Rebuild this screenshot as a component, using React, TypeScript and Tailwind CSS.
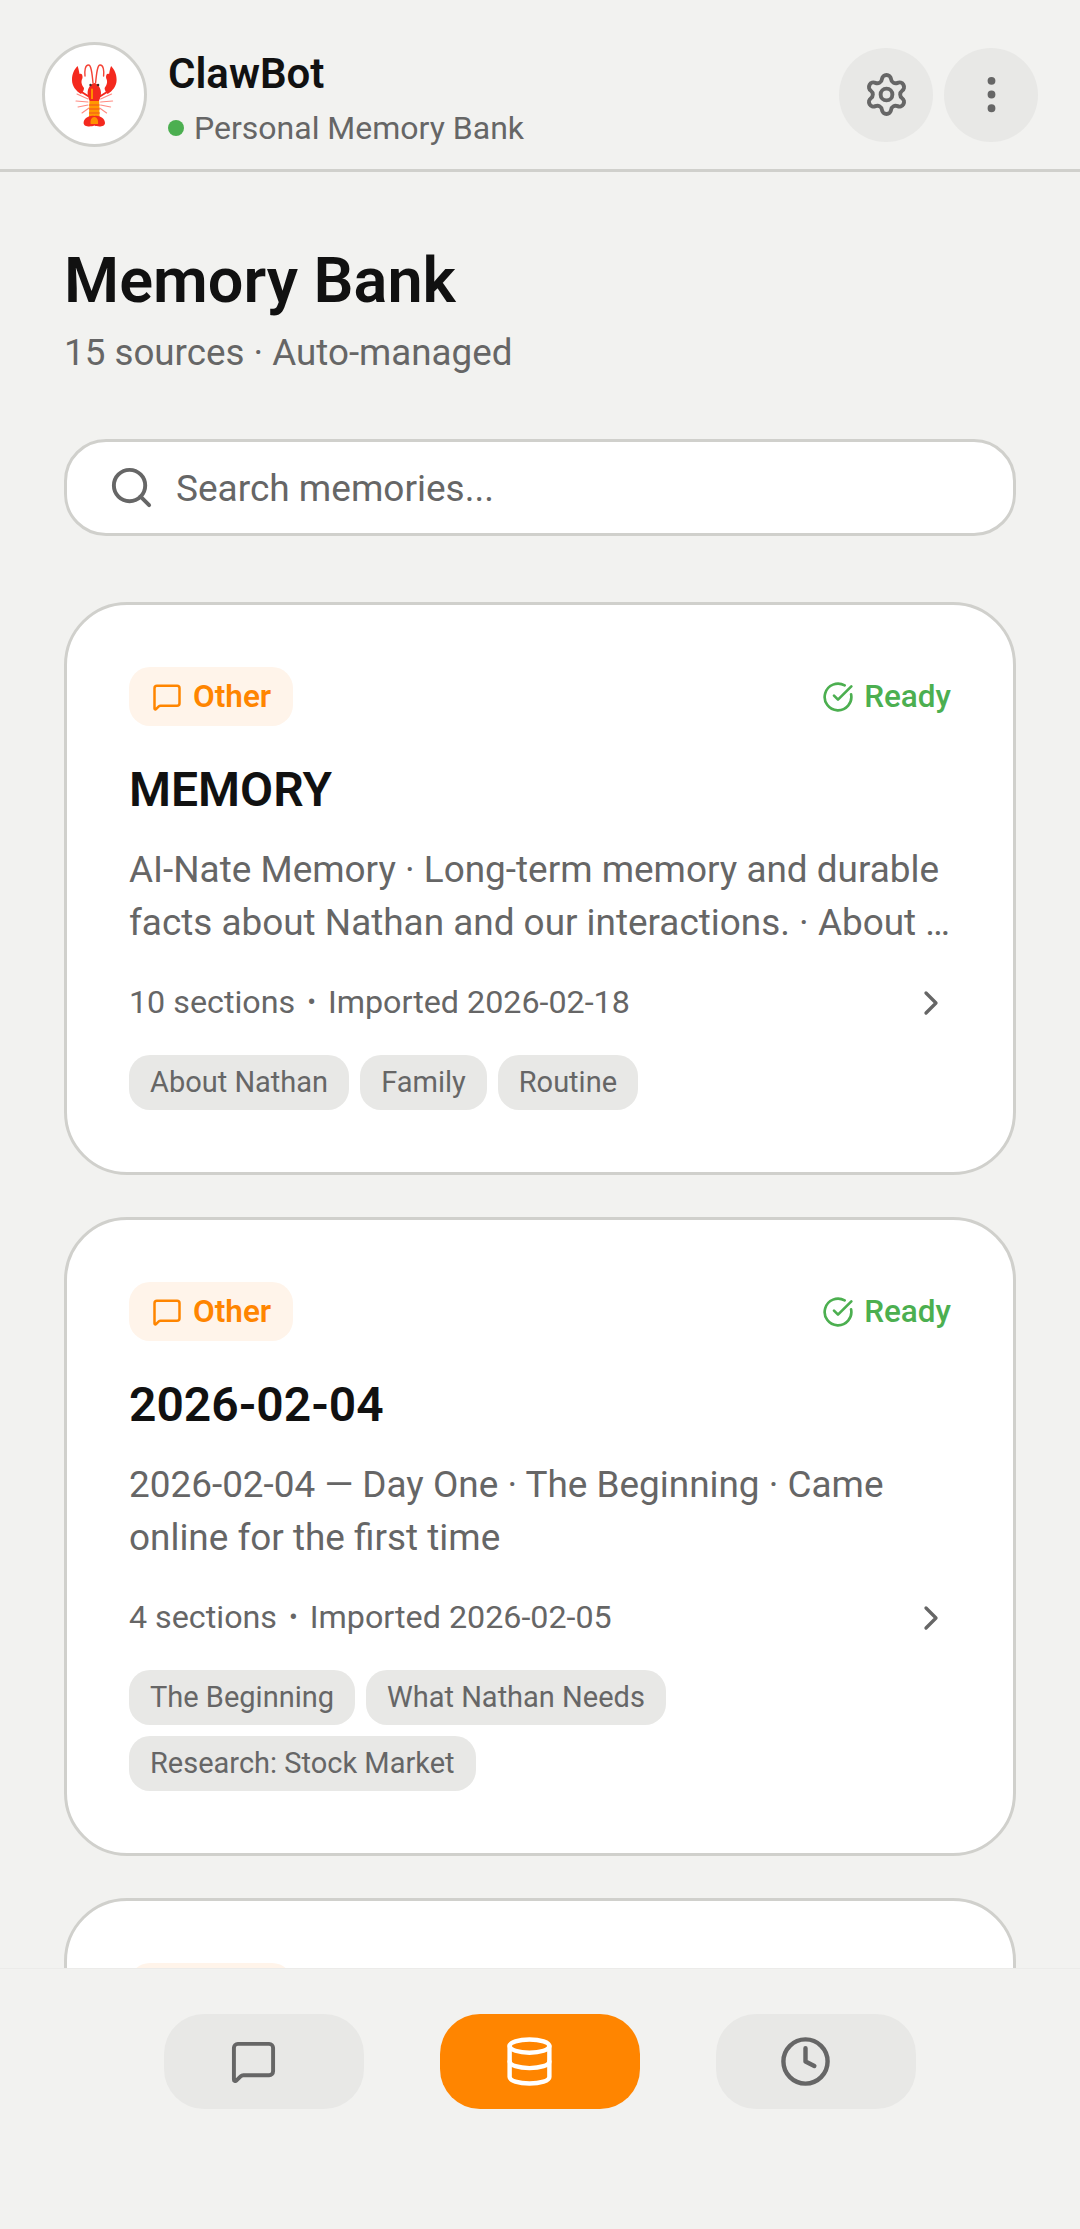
import React from 'react';
import {
  Settings,
  EllipsisVertical,
  Search,
  MessageSquare,
  CircleCheckBig,
  ChevronRight,
  Database,
  Clock,
} from 'lucide-react';

// --- Lobster logo ---
const Lobster = () => (
  <svg viewBox="0 0 46 64" className="w-[46px] h-[64px]">
    {[false, true].map((flip) => (
      <g key={String(flip)} transform={flip ? 'translate(44.6 0) scale(-1 1)' : undefined}>
        <path d="M21 20C20 9 19 2 16.5 2C13 2 12.5 8 13 13" fill="none" stroke="#f44336" strokeWidth="1.4" strokeLinecap="round" />
        <path d="M5.5 3C2 7 0 11 0 17C0 23 4 28 9 31C11 29 12 27 12 25C9 21 9 18 10.5 15C11 11 9 10 7.5 11C7 8 6.5 5 5.5 3Z" fill="#f4291e" />
        <path d="M8 28L16 33" stroke="#f4291e" strokeWidth="2" strokeLinecap="round" />
        <path d="M5 31L16 36M4 38L16 39M6 44L16 42M10 50L17 45" fill="none" stroke="#ff8a80" strokeWidth="1.1" strokeLinecap="round" />
      </g>
    ))}
    <path d="M22.3 20C26 21 29 25 29 30C29 34 27.5 36 27 38L17.6 38C17.1 36 15.6 34 15.6 30C15.6 25 18.6 21 22.3 20Z" fill="#f4291e" />
    <path d="M19 27C19 25 21 25 21 27L21 36L19 36Z" fill="#ff8f00" />
    <circle cx="18.5" cy="22" r="1.2" fill="#3b2b2b" />
    <circle cx="26.1" cy="22" r="1.2" fill="#3b2b2b" />
    <path d="M17.4 38L27.2 38L27.6 54L17 54Z" fill="#ff9800" />
    <path d="M17 42L27.6 42M17 46L27.8 46M17 50L27.8 50" stroke="#f4511e" strokeWidth="1.2" />
    <path d="M22.3 53C27 52 33 55 33 60C33 64 26 64 22.3 62.5C18.6 64 11.6 64 11.6 60C11.6 55 17.6 52 22.3 53Z" fill="#f4291e" />
    <path d="M22.3 54C25 54 26.5 57 26 61L18.6 61C18.1 57 19.6 54 22.3 54Z" fill="#ff8f00" />
  </svg>
);

// --- Memory Card ---
interface MemoryCardProps {
  title: string;
  description: string;
  sections: number;
  imported: string;
  tags: string[];
}

const MemoryCard: React.FC<MemoryCardProps> = ({ title, description, sections, imported, tags }) => (
  <div className="shrink-0 bg-white border-[3px] border-[#d0d0cc] rounded-[63px] p-[62px]">
    <div className="flex justify-between items-center">
      <div className="flex items-center gap-[11px] h-[59px] pl-[23px] pr-[22px] rounded-[21px] bg-[#fff4ea] text-[#ff8500]">
        <MessageSquare className="w-[30px] h-[30px]" strokeWidth={2} />
        <span className="text-[31.5px] font-semibold">Other</span>
      </div>
      <div className="flex items-center gap-[10px] text-[#4caf50]">
        <CircleCheckBig className="w-[32px] h-[32px]" strokeWidth={2} />
        <span className="text-[31.5px] font-medium">Ready</span>
      </div>
    </div>
    <h2 className="mt-[32px] text-[48px] leading-[63px] font-semibold text-[#111111]">{title}</h2>
    <p className="mt-[23px] text-[36.9px] leading-[52.5px] text-[#666666]">{description}</p>
    <div className="mt-[30px] flex items-center justify-between h-[47px] text-[32.25px] text-[#666666]">
      <div className="flex items-center gap-[12px]">
        <span>{sections} sections</span>
        <span className="text-[26px]">•</span>
        <span>Imported {imported}</span>
      </div>
      <ChevronRight className="w-[40px] h-[40px]" strokeWidth={2} />
    </div>
    <div className="mt-[29px] flex flex-wrap gap-[11px]">
      {tags.map((tag) => (
        <span key={tag} className="flex items-center h-[55px] px-[21px] rounded-[21px] bg-[#e8e8e6] text-[29px] text-[#666666]">
          {tag}
        </span>
      ))}
    </div>
  </div>
);

export default function App() {
  return (
    <div className="flex flex-col h-[2229px] w-[1080px] overflow-hidden bg-[#f2f2f0] font-['Roboto',sans-serif]">
      {/* Header */}
      <header className="shrink-0 flex items-center justify-between h-[172px] pl-[42px] pr-[42px] pt-[20px] border-b-[3px] border-[#d0d0cc]">
        <div className="flex items-center gap-[21px]">
          <div className="flex items-center justify-center w-[105px] h-[105px] rounded-full bg-white border-[3px] border-[#d0d0cc]">
            <Lobster />
          </div>
          <div className="pt-[7px]">
            <div className="text-[42px] leading-[55px] font-semibold text-[#111111]">ClawBot</div>
            <div className="flex items-center gap-[10px] mt-[5px]">
              <span className="w-[16px] h-[16px] rounded-full bg-[#4caf50]" />
              <span className="text-[32px] leading-[44px] text-[#666666]">Personal Memory Bank</span>
            </div>
          </div>
        </div>
        <div className="flex items-center gap-[11px]">
          <button className="flex items-center justify-center w-[94px] h-[94px] rounded-full bg-[#e8e8e6] text-[#666666]">
            <Settings className="w-[47px] h-[47px]" strokeWidth={2} />
          </button>
          <button className="flex items-center justify-center w-[94px] h-[94px] rounded-full bg-[#e8e8e6] text-[#666666]">
            <EllipsisVertical className="w-[47px] h-[47px]" strokeWidth={2} />
          </button>
        </div>
      </header>

      {/* Content */}
      <main className="flex-1 min-h-0 overflow-hidden px-[64px] pt-[75px]">
        <h1 className="text-[63px] leading-[68px] font-semibold text-[#111111]">Memory Bank</h1>
        <p className="mt-[16px] text-[36.75px] leading-[44px] text-[#666666]">15 sources · Auto-managed</p>
        <div className="mt-[64px] flex items-center gap-[21px] h-[97px] px-[41px] bg-white border-[3px] border-[#d0d0cc] rounded-[42px]">
          <Search className="w-[47px] h-[47px] text-[#666666]" strokeWidth={2} />
          <span className="pt-[2px] text-[37px] text-[#666666]">Search memories...</span>
        </div>
        <div className="mt-[66px] flex flex-col gap-[42px]">
          <MemoryCard
            title="MEMORY"
            description="AI-Nate Memory · Long-term memory and durable facts about Nathan and our interactions. · About …"
            sections={10}
            imported="2026-02-18"
            tags={['About Nathan', 'Family', 'Routine']}
          />
          <MemoryCard
            title="2026-02-04"
            description="2026-02-04 — Day One · The Beginning · Came online for the first time"
            sections={4}
            imported="2026-02-05"
            tags={['The Beginning', 'What Nathan Needs', 'Research: Stock Market']}
          />
          {/* third card is only peeking above the nav */}
          <div className="shrink-0 h-[400px] bg-white border-[3px] border-[#d0d0cc] rounded-[63px] p-[62px]">
            <div className="w-[164px] h-[59px] rounded-[21px] bg-[#fff4ea]" />
          </div>
        </div>
      </main>

      {/* Bottom navigation */}
      <nav className="shrink-0 flex justify-center gap-[76px] h-[261px] pt-[45px] bg-[#f2f2f0] border-t border-[#ebebe9]">
        <button className="flex items-center justify-center w-[200px] h-[95px] pr-[21px] rounded-[40px] bg-[#e8e8e6] text-[#666666]">
          <MessageSquare className="w-[47px] h-[47px]" strokeWidth={2} />
        </button>
        <button className="flex items-center justify-center w-[200px] h-[95px] pr-[21px] rounded-[40px] bg-[#ff8500] text-white">
          <Database className="w-[53px] h-[53px]" strokeWidth={2} />
        </button>
        <button className="flex items-center justify-center w-[200px] h-[95px] pr-[21px] rounded-[40px] bg-[#e8e8e6] text-[#666666]">
          <Clock className="w-[53px] h-[53px]" strokeWidth={2} />
        </button>
      </nav>
    </div>
  );
}
